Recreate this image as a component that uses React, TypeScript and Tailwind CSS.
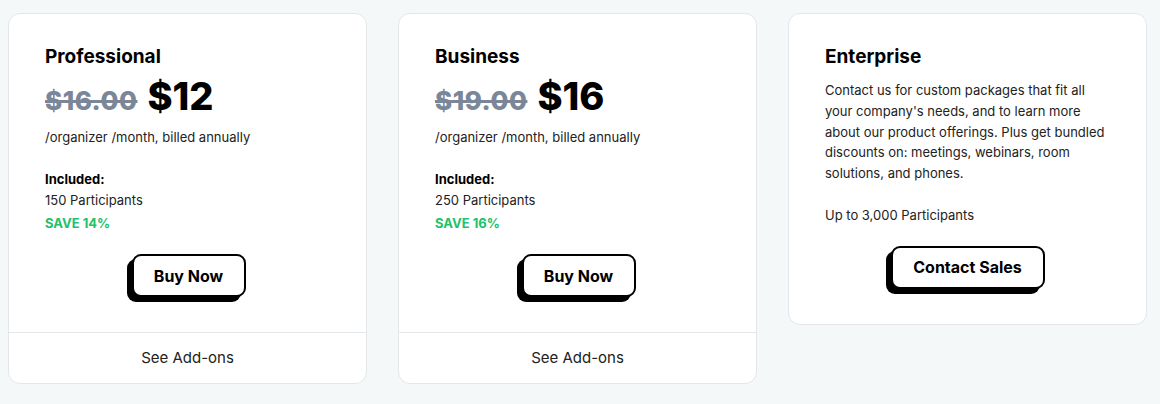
import React from "react";

interface PlanProps {
  name: string;
  oldPrice: string;
  price: string;
  participants: string;
  save: string;
}

const ShadowButton: React.FC<{ label: string; width: string }> = ({ label, width }) => (
  <button
    className={`${width} h-[43px] rounded-[9px] border-2 border-black bg-white text-[16px] font-bold text-black shadow-[-5px_5px_0_0_#000]`}
  >
    {label}
  </button>
);

const PlanCard: React.FC<PlanProps> = ({ name, oldPrice, price, participants, save }) => (
  <div className="w-[359px] shrink-0 rounded-xl border border-[#e3e7ea] bg-white flex flex-col">
    <div className="px-[36px] pt-[31px] pb-[35px] flex flex-col">
      <h2 className="text-[19px] leading-[24px] font-bold text-black">{name}</h2>
      <div className="flex items-baseline gap-[10px] mt-[5px] h-[44px]">
        <span className="text-[26px] font-extrabold tracking-[0.5px] text-[#7b8799] line-through decoration-[3px]">{oldPrice}</span>
        <span className="text-[38px] leading-[44px] font-extrabold text-black">{price}</span>
      </div>
      <p className="mt-[10px] text-[13px] leading-[18px] text-[#222]">/organizer /month, billed annually</p>
      <p className="mt-[24px] text-[13px] leading-[18px] font-bold text-black">Included:</p>
      <p className="mt-[3px] text-[13px] leading-[18px] text-[#222]">{participants}</p>
      <p className="mt-[5px] text-[13px] leading-[18px] font-bold text-[#23c16b]">{save}</p>
      <div className="flex justify-center mt-[22px] pl-[2px]">
        <ShadowButton label="Buy Now" width="w-[114px]" />
      </div>
    </div>
    <div className="border-t border-[#e3e7ea] h-[51px] flex items-center justify-center text-[15px] text-[#222]">
      See Add-ons
    </div>
  </div>
);

export default function App() {
  return (
    <div
      className="w-[1160px] h-[404px] bg-[#f5f8f9] pl-[8px] pt-[13px] flex items-start gap-[31px]"
      style={{ fontFamily: "Inter, 'Noto Sans', sans-serif" }}
    >
      <PlanCard name="Professional" oldPrice="$16.00" price="$12" participants="150 Participants" save="SAVE 14%" />
      <PlanCard name="Business" oldPrice="$19.00" price="$16" participants="250 Participants" save="SAVE 16%" />
      <div className="w-[359px] shrink-0 rounded-xl border border-[#e3e7ea] bg-white px-[36px] pt-[31px] pb-[35px] flex flex-col">
        <h2 className="text-[19px] leading-[24px] font-bold text-black">Enterprise</h2>
        <p className="mt-[11px] text-[13px] leading-[20.8px] text-[#222]">
          Contact us for custom packages that fit all your company's needs, and to learn more about our product
          offerings. Plus get bundled discounts on: meetings, webinars, room solutions, and phones.
        </p>
        <p className="mt-[21px] text-[13px] leading-[20.8px] text-[#222]">Up to 3,000 Participants</p>
        <div className="flex justify-center mt-[20px]">
          <ShadowButton label="Contact Sales" width="w-[154px]" />
        </div>
      </div>
    </div>
  );
}
